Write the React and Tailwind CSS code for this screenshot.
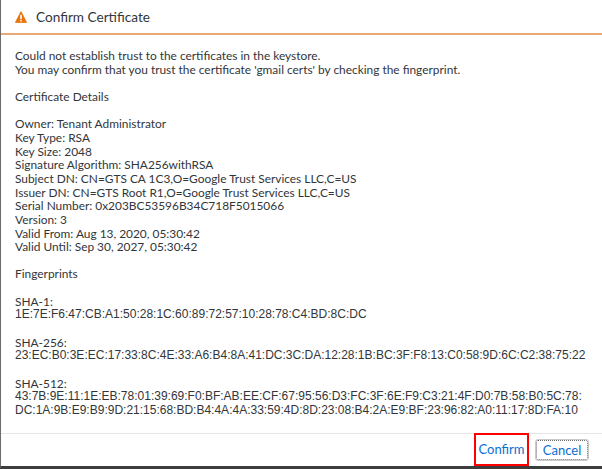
import React from 'react';

const bodyFont = { fontFamily: 'Lato, "Open Sans", sans-serif' };
const hexFont = { fontFamily: '"Liberation Sans", Arial, sans-serif' };

// certificate details as shown in the dialog
const details = [
    'Owner: Tenant Administrator',
    'Key Type: RSA',
    'Key Size: 2048',
    'Signature Algorithm: SHA256withRSA',
    'Subject DN: CN=GTS CA 1C3,O=Google Trust Services LLC,C=US',
    'Issuer DN: CN=GTS Root R1,O=Google Trust Services LLC,C=US',
    'Serial Number: 0x203BC53596B34C718F5015066',
    'Version: 3',
    'Valid From: Aug 13, 2020, 05:30:42',
    'Valid Until: Sep 30, 2027, 05:30:42',
];

const fingerprints = [
    { label: 'SHA-1:', lines: ['1E:7E:F6:47:CB:A1:50:28:1C:60:89:72:57:10:28:78:C4:BD:8C:DC'] },
    { label: 'SHA-256:', lines: ['23:EC:B0:3E:EC:17:33:8C:4E:33:A6:B4:8A:41:DC:3C:DA:12:28:1B:BC:3F:F8:13:C0:58:9D:6C:C2:38:75:22'] },
    {
        label: 'SHA-512:',
        lines: [
            '43:7B:9E:11:1E:EB:78:01:39:69:F0:BF:AB:EE:CF:67:95:56:D3:FC:3F:6E:F9:C3:21:4F:D0:7B:58:B0:5C:78:',
            'DC:1A:9B:E9:B9:9D:21:15:68:BD:B4:4A:4A:33:59:4D:8D:23:08:B4:2A:E9:BF:23:96:82:A0:11:17:8D:FA:10',
        ],
    },
];

const Gap = () => <div className="h-[13.65px]" />;

const WarningIcon = () => (
    <svg width="12" height="12" viewBox="0 0 12 12" className="shrink-0">
        <path d="M6 0.6 L11.6 11.4 L0.4 11.4 Z" fill="#e9730c" stroke="#e9730c" strokeWidth="0.8" strokeLinejoin="round" />
        <rect x="5.2" y="3.8" width="1.6" height="4.4" fill="#fff" />
        <rect x="5.2" y="9" width="1.6" height="1.5" fill="#fff" />
    </svg>
);

const App = () => {
    return (
        <div className="w-[602px] h-[469px] bg-white flex flex-col border-l border-l-[#6b6b6b] border-b-[3px] border-b-[#3d3d3d] text-[#32363a]" style={bodyFont}>
            {/* header */}
            <div className="h-[35px] shrink-0 flex items-center gap-[9px] pl-[14px] border-b-2 border-[#e9a874]">
                <WarningIcon />
                <span className="text-[13.6px] pt-[1px]">Confirm Certificate</span>
            </div>

            {/* content */}
            <div className="flex-1 px-[14px] pt-[14px] text-[11.9px] leading-[13.65px]">
                <div>Could not establish trust to the certificates in the keystore.</div>
                <div>You may confirm that you trust the certificate 'gmail certs' by checking the fingerprint.</div>
                <Gap />
                <div>Certificate Details</div>
                <Gap />
                {details.map((line) => (
                    <div key={line}>{line}</div>
                ))}
                <Gap />
                <div>Fingerprints</div>
                {fingerprints.map((fp) => (
                    <div key={fp.label}>
                        <Gap />
                        <div>{fp.label}</div>
                        {fp.lines.map((l) => (
                            <div key={l} className="text-[12px]" style={hexFont}>{l}</div>
                        ))}
                    </div>
                ))}
            </div>

            {/* footer */}
            <div className="h-[33px] shrink-0 border-t border-[#e5e5e5] flex items-center justify-end gap-[7px] pr-[14px]">
                <button className="h-[33px] w-[55px] border-2 border-[#ff0000] text-[#0a6ed1] text-[13px] -mt-[1px]">
                    Confirm
                </button>
                <button className="h-[20px] w-[52px] border border-dotted border-[#6a6d70] rounded-[2px] text-[#0a6ed1] text-[13px] outline outline-1 outline-[#c9c9c9]">
                    Cancel
                </button>
            </div>
        </div>
    );
};

export default App;
